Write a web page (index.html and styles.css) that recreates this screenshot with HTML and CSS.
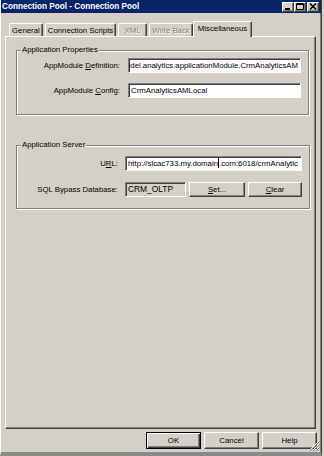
FILE: index.html
```html
<!DOCTYPE html>
<html lang="en">

<head>
    <meta charset="UTF-8">
    <meta name="viewport" content="width=device-width, initial-scale=1.0">
    <title>Connection Pool</title>
    <link rel="stylesheet" href="styles.css">
</head>

<body>
    <div class="window">
        <div class="titlebar">
            <span class="title">Connection Pool - Connection Pool</span>
            <div class="caption-buttons">
                <span class="cap-btn">
                    <svg width="8" height="7" viewBox="0 0 8 7"><rect x="1" y="5" width="5" height="2" fill="#000"/></svg>
                </span>
                <span class="cap-btn">
                    <svg width="8" height="7" viewBox="0 0 8 7"><path d="M0.5 0.5h7v6h-7z M0.5 1.5h7" fill="none" stroke="#000" stroke-width="1"/></svg>
                </span>
                <span class="cap-btn close">
                    <svg width="8" height="7" viewBox="0 0 8 7"><path d="M1 0.5l6 6 M7 0.5l-6 6" stroke="#000" stroke-width="1.5"/></svg>
                </span>
            </div>
        </div>

        <div class="dialog">
            <div class="tabs">
                <span class="tab">General</span>
                <span class="tab">Connection Scripts</span>
                <span class="tab disabled">XML</span>
                <span class="tab disabled">Write Back</span>
                <span class="tab active">Miscellaneous</span>
            </div>

            <div class="panel">
                <fieldset class="group props">
                    <legend>Application Properties</legend>
                    <div class="row">
                        <label>AppModule <u>D</u>efinition:</label>
                        <div class="field scrolled"><span>odel.analytics.applicationModule.CrmAnalyticsAM</span></div>
                    </div>
                    <div class="row">
                        <label>AppModule <u>C</u>onfig:</label>
                        <div class="field">CrmAnalyticsAMLocal</div>
                    </div>
                </fieldset>

                <fieldset class="group server">
                    <legend>Application Server</legend>
                    <div class="row">
                        <label>U<u>R</u>L:</label>
                        <div class="field">http://slcac733.my.domain<span class="caret"></span>.com:6018/crmAnalytic</div>
                    </div>
                    <div class="row">
                        <label>SQL Bypass Database:</label>
                        <div class="db-line">
                            <div class="field readonly">CRM_OLTP</div>
                            <button class="btn set"><u>S</u>et...</button>
                            <button class="btn clear"><u>C</u>lear</button>
                        </div>
                    </div>
                </fieldset>
            </div>

            <div class="footer">
                <button class="btn default">OK</button>
                <button class="btn">Cancel</button>
                <button class="btn">Help</button>
            </div>
        </div>

        <svg class="grip" width="11" height="11" viewBox="0 0 11 11">
            <path d="M10 1L1 10 M10 4L4 10 M10 7L7 10" stroke="#fff" stroke-width="1"/>
            <path d="M11 1L1 11 M11 4L4 11 M11 7L7 11" stroke="#808080" stroke-width="1"/>
        </svg>
    </div>
</body>

</html>
```

FILE: styles.css
```css
html, body {
    margin: 0;
    padding: 0;
}

body {
    background-color: #d4d0c8;
    font-family: 'Liberation Sans', Arial, sans-serif;
    font-size: 7.8px;
    color: #000;
    width: 324px;
    height: 456px;
    overflow: hidden;
}

.window {
    position: relative;
    box-sizing: border-box;
    width: 322px;
    height: 456px;
    background-color: #d4d0c8;
    border-left: 1px solid #fff;
    border-right: 1px solid #404040;
    border-bottom: 4px solid #8a8a8a;
    box-shadow: inset -1px 0 #808080;
    display: flex;
    flex-direction: column;
}

.titlebar {
    height: 13px;
    background-color: #0a246a;
    display: flex;
    align-items: center;
    justify-content: space-between;
    padding: 0 2px 0 1px;
}

.title {
    color: #fff;
    font-weight: bold;
    font-size: 8.2px;
}

.caption-buttons {
    display: flex;
}

.cap-btn {
    box-sizing: border-box;
    width: 12px;
    height: 10px;
    background-color: #d4d0c8;
    border: 1px solid;
    border-color: #fff #404040 #404040 #fff;
    box-shadow: inset -1px -1px #808080;
    display: flex;
    align-items: center;
    justify-content: center;
}

.cap-btn.close {
    margin-left: 1px;
}

.dialog {
    flex: 1;
    display: flex;
    flex-direction: column;
    padding: 8px 5px 0 4px;
}

.tabs {
    display: flex;
    align-items: flex-end;
    padding-left: 4px;
    height: 15px;
}

.tab {
    box-sizing: border-box;
    height: 13px;
    min-width: 29px;
    margin-right: 2px;
    padding: 0 2px;
    display: flex;
    align-items: center;
    justify-content: center;
    border-top: 1px solid #fff;
    border-left: 1px solid #fff;
    border-right: 1px solid #404040;
    box-shadow: inset -1px 0 #808080;
    border-radius: 2px 2px 0 0;
    white-space: nowrap;
}

.tab.disabled {
    color: #808080;
    text-shadow: 1px 1px #fff;
}

.tab.active {
    position: relative;
    height: 16px;
    margin: 0 0 -1px -2px;
    padding: 0 4px 2px;
    background-color: #d4d0c8;
    z-index: 1;
}

.panel {
    flex: 1;
    border-top: 1px solid #fff;
    border-left: 1px solid #fff;
    border-right: 1px solid #404040;
    border-bottom: 1px solid #404040;
    box-shadow: inset -1px -1px #808080;
    padding: 8px 6px 0 10px;
}

.group {
    margin: 0;
    padding: 0 7px 16px 0;
    border: 1px solid #808080;
    box-shadow: inset 1px 1px #fff, 1px 1px #fff;
    display: flex;
    flex-direction: column;
}

.group legend {
    margin-left: 4px;
    padding: 0 1px;
    line-height: 10px;
    background-color: #d4d0c8;
}

.group.server {
    margin-top: 25px;
    padding-bottom: 11px;
}

.row {
    display: grid;
    grid-template-columns: 103px 1fr;
    column-gap: 8px;
    align-items: center;
}

.props .row {
    margin-top: 3px;
}

.props .row + .row {
    margin-top: 10px;
}

.server .row {
    grid-template-columns: 101px 1fr;
    column-gap: 7px;
    margin-top: 6px;
}

.server .row + .row {
    margin-top: 11px;
}

label {
    text-align: right;
    white-space: nowrap;
}

.field {
    box-sizing: border-box;
    height: 15px;
    line-height: 13px;
    padding: 0 2px;
    background-color: #fff;
    border: 1px solid;
    border-color: #808080 #fff #fff #808080;
    box-shadow: inset 1px 1px #404040;
    white-space: nowrap;
    overflow: hidden;
}

.field.scrolled {
    display: flex;
    justify-content: flex-end;
}

.field.readonly {
    width: 61px;
    background-color: #d4d0c8;
    font-size: 8.4px;
}

.caret {
    display: inline-block;
    width: 1px;
    height: 10px;
    background-color: #000;
    vertical-align: -2px;
}

.db-line {
    display: flex;
    align-items: center;
}

.btn {
    box-sizing: border-box;
    width: 55px;
    height: 17px;
    margin: 0;
    padding: 0;
    font-family: inherit;
    font-size: 7.8px;
    color: #000;
    background-color: #d4d0c8;
    border: 1px solid;
    border-color: #fff #404040 #404040 #fff;
    box-shadow: inset -1px -1px #808080;
    border-radius: 0;
}

.btn.set {
    width: 56px;
    height: 15px;
    margin-left: 3px;
}

.btn.clear {
    width: 54px;
    height: 15px;
    margin-left: 3px;
}

.btn.default {
    border: 1px solid #000;
    box-shadow: inset 1px 1px #fff, inset -1px -1px #404040, inset -2px -2px #808080;
}

.footer {
    display: flex;
    justify-content: flex-end;
    gap: 3px;
    margin: 3px -1px 3px 0;
}

.grip {
    position: absolute;
    right: 1px;
    bottom: 1px;
}
```
